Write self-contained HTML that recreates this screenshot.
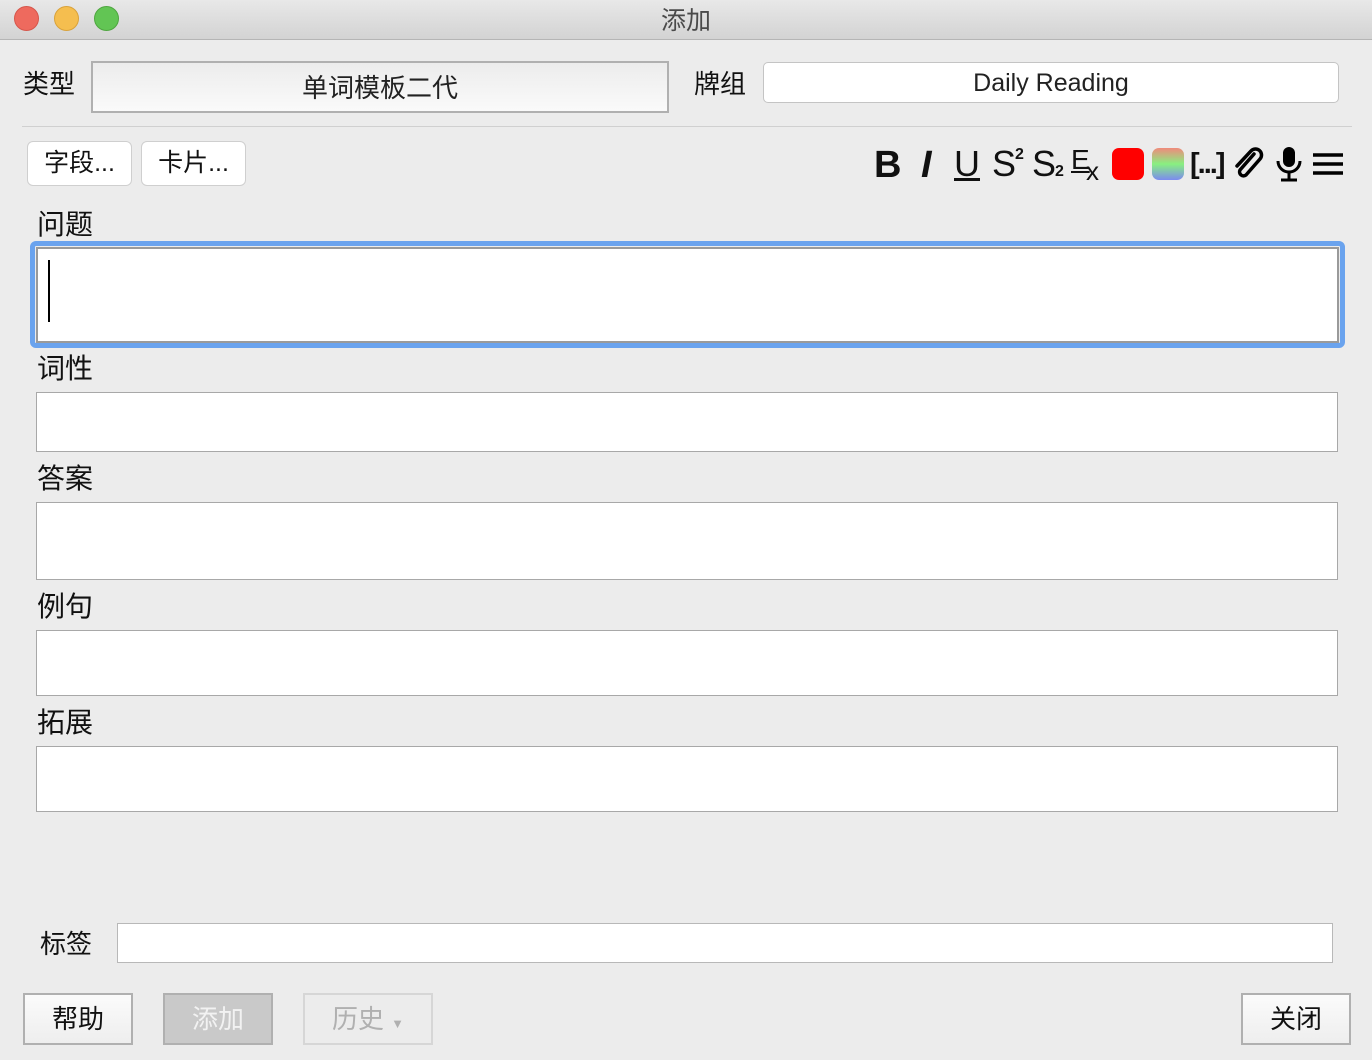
<!DOCTYPE html>
<html><head><meta charset="utf-8"><style>
*{margin:0;padding:0;box-sizing:border-box}
body{width:1372px;height:1060px;background:#ececec;font-family:"Liberation Sans","Noto Sans CJK SC",sans-serif;position:relative;overflow:hidden;color:#111}
.a{position:absolute}
.title{left:0;top:0;width:1372px;height:40px;background:linear-gradient(#e8e8e8,#d3d3d3);border-bottom:1px solid #b5b5b5}
.dot{top:6px;width:25px;height:25px;border-radius:50%}
.lbl{font-size:26px;line-height:1}
.box{background:#fff;border:1px solid #a8a8a8}
.btn{border:2px solid #b0b0b0;background:linear-gradient(#fbfbfb,#eeeeee);font-size:26px;text-align:center;line-height:49px}
.sb{background:#fff;border:1.5px solid #cfcfcf;border-radius:6px;font-size:25px;text-align:center;line-height:43px}
.t{font-size:36px;line-height:36px}
</style></head><body>
<div class="a title"></div>
<div class="a dot" style="left:14px;background:#ee6a5e;border:1px solid #d6564b"></div>
<div class="a dot" style="left:54px;background:#f5be4f;border:1px solid #d9a23a"></div>
<div class="a dot" style="left:94px;background:#62c554;border:1px solid #4ea63f"></div>
<div class="a" style="left:0;width:1372px;top:1px;text-align:center;font-size:25px;color:#4a4a4a">添加</div>

<div class="a lbl" style="left:23px;top:71px">类型</div>
<div class="a" style="left:91px;top:61px;width:578px;height:52px;border:2px solid #b0b0b0;background:linear-gradient(#ececec,#fafafa);font-size:26px;text-align:center;line-height:50px;color:#222">单词模板二代</div>
<div class="a lbl" style="left:694px;top:71px">牌组</div>
<div class="a" style="left:763px;top:62px;width:576px;height:41px;border:1px solid #c4c4c4;border-radius:5px;background:#fff;font-size:25px;text-align:center;line-height:41px;color:#222">Daily Reading</div>
<div class="a" style="left:22px;top:126px;width:1330px;height:1px;background:#d0d0d0"></div>

<div class="a sb" style="left:27px;top:141px;width:105px;height:45px">字段...</div>
<div class="a sb" style="left:141px;top:141px;width:105px;height:45px">卡片...</div>

<div class="a t" style="left:874px;top:147px;font-size:38px;font-weight:bold">B</div>
<div class="a t" style="left:921px;top:147px;font-size:38px;font-weight:bold;font-style:italic">I</div>
<div class="a t" style="left:954px;top:146px;text-decoration:underline">U</div>
<div class="a t" style="left:992px;top:146px">S</div>
<div class="a" style="left:1015px;top:146px;font-size:16px;font-weight:bold">2</div>
<div class="a t" style="left:1032px;top:146px">S</div>
<div class="a" style="left:1055px;top:163px;font-size:16px;font-weight:bold">2</div>
<div class="a" style="left:1071px;top:145px;font-size:28px;line-height:30px;text-decoration:underline">E</div>
<div class="a" style="left:1086px;top:158px;font-size:26px;line-height:26px">x</div>
<div class="a" style="left:1112px;top:148px;width:32px;height:32px;border-radius:7px;background:#f00"></div>
<div class="a" style="left:1152px;top:148px;width:32px;height:32px;border-radius:7px;background:linear-gradient(#f08a7c,#88f080,#7c8af0)"></div>
<div class="a" style="left:1190px;top:147px;font-size:29px;font-weight:bold;line-height:34px;letter-spacing:-2px">[...]</div>
<svg class="a" style="left:1232px;top:146px" width="34" height="36" viewBox="0 0 34 36"><path d="M22 8 L8 24 a4 4 0 0 0 6 5 L28 13 a6 6 0 0 0 -9 -8 L5 20" fill="none" stroke="#000" stroke-width="3.5" stroke-linecap="round"/></svg>
<svg class="a" style="left:1274px;top:146px" width="30" height="36" viewBox="0 0 30 36"><rect x="9" y="1" width="12" height="20" rx="6"/><path d="M4 15 a11 11 0 0 0 22 0 M15 26 v7 M7 34 h16" fill="none" stroke="#000" stroke-width="3"/></svg>
<svg class="a" style="left:1312px;top:151px" width="32" height="26"><path d="M1 4h30M1 13h30M1 22h30" stroke="#000" stroke-width="3.5"/></svg>

<div class="a lbl" style="left:37px;top:211px;font-size:28px">问题</div>
<div class="a" style="left:30px;top:241px;width:1315px;height:107px;border:5px solid #6aa3ee;border-radius:6px"></div>
<div class="a box" style="left:36px;top:247px;width:1303px;height:96px;border:2px solid #9a9a9a"></div>
<div class="a" style="left:48px;top:260px;width:2px;height:62px;background:#000"></div>

<div class="a lbl" style="left:37px;top:355px;font-size:28px">词性</div>
<div class="a box" style="left:36px;top:392px;width:1302px;height:60px"></div>
<div class="a lbl" style="left:37px;top:465px;font-size:28px">答案</div>
<div class="a box" style="left:36px;top:502px;width:1302px;height:78px"></div>
<div class="a lbl" style="left:37px;top:593px;font-size:28px">例句</div>
<div class="a box" style="left:36px;top:630px;width:1302px;height:66px"></div>
<div class="a lbl" style="left:37px;top:709px;font-size:28px">拓展</div>
<div class="a box" style="left:36px;top:746px;width:1302px;height:66px"></div>

<div class="a lbl" style="left:40px;top:931px">标签</div>
<div class="a box" style="left:117px;top:923px;width:1216px;height:40px;border-color:#b8b8b8"></div>

<div class="a btn" style="left:23px;top:993px;width:110px;height:52px">帮助</div>
<div class="a btn" style="left:163px;top:993px;width:110px;height:52px;background:#c9c9c9;color:#f2f2f2">添加</div>
<div class="a btn" style="left:303px;top:993px;width:130px;height:52px;background:#ececec;border-color:#d6d6d6;color:#b0b0b0">历史 <span style="font-size:13px">▼</span></div>
<div class="a btn" style="left:1241px;top:993px;width:110px;height:52px">关闭</div>
</body></html>
